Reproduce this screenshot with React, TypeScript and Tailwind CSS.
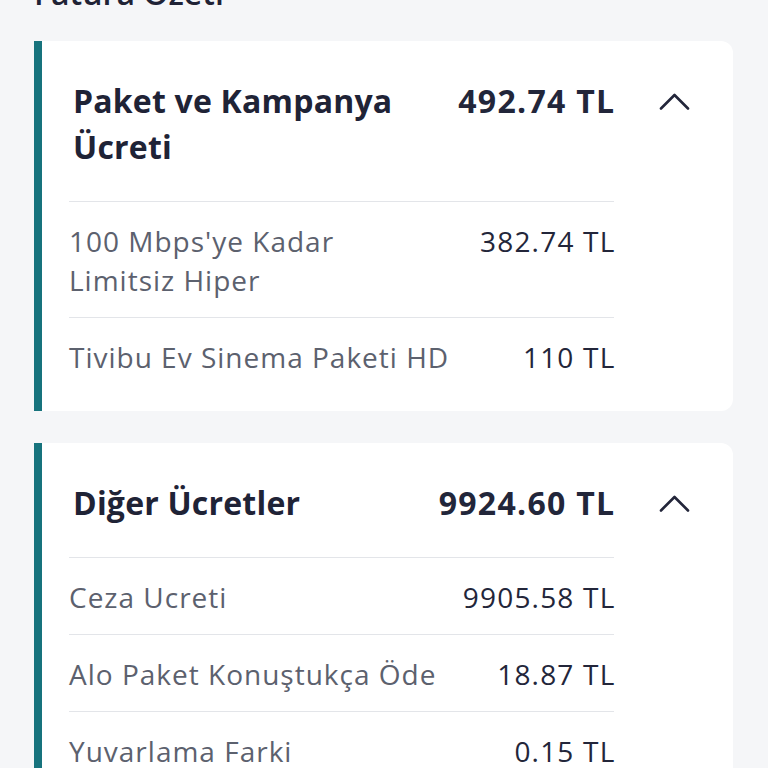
import React from "react";

type Item = { label: React.ReactNode; amount: string };

function Chevron() {
  return (
    <svg width="31" height="18" viewBox="0 0 31 18" fill="none">
      <path d="M2 16.5 L15.5 3 L29 16.5" stroke="#23263a" strokeWidth="2.6" strokeLinecap="round" strokeLinejoin="round" />
    </svg>
  );
}

function Card({ title, total, items }: { title: React.ReactNode; total: string; items: Item[] }) {
  return (
    <div className="flex bg-white rounded-r-[12px] overflow-hidden">
      <div className="w-[8px] shrink-0 bg-[#17737d]" />
      <div className="flex-1 pl-[27px] pr-[43px] pt-[37px] pb-[17px]">
        <div className="flex items-start pb-[31px]">
          <div className="flex-1 pl-[4px] text-[32px] leading-[46px] font-bold tracking-[0.2px] text-[#1f2336]">{title}</div>
          <div className="text-[32px] leading-[46px] font-bold tracking-[1.3px] -mr-[1.5px] text-[#22263a] whitespace-nowrap">{total}</div>
          <div className="w-[76px] h-[46px] flex items-center justify-end">
            <Chevron />
          </div>
        </div>
        <div className="mr-[76px]">
          {items.map((it, i) => (
            <div key={i} className="flex items-start justify-between border-t border-[#e3e5e9] pt-[20px] pb-[17px]">
              <div className="text-[28px] leading-[39px] tracking-[1px] text-[#5c616e] whitespace-nowrap">{it.label}</div>
              <div className="text-[28px] leading-[39px] tracking-[1.2px] -mr-[1.5px] font-medium text-[#23263a] whitespace-nowrap">{it.amount}</div>
            </div>
          ))}
        </div>
      </div>
    </div>
  );
}

export default function App() {
  return (
    <div className="min-h-screen bg-[#f5f6f8] pl-[34px] pr-[35px] font-['Open_Sans',sans-serif] overflow-hidden">
      <h2 className="-mt-[27px] text-[32px] leading-[40px] font-semibold text-[#1f2336]">Fatura Özeti</h2>
      <div className="mt-[28px] flex flex-col gap-[32px]">
        <Card
          title={<>Paket ve Kampanya<br />Ücreti</>}
          total="492.74 TL"
          items={[
            { label: <>100 Mbps'ye Kadar<br />Limitsiz Hiper</>, amount: "382.74 TL" },
            { label: "Tivibu Ev Sinema Paketi HD", amount: "110 TL" },
          ]}
        />
        <Card
          title="Diğer Ücretler"
          total="9924.60 TL"
          items={[
            { label: "Ceza Ucreti", amount: "9905.58 TL" },
            { label: "Alo Paket Konuştukça Öde", amount: "18.87 TL" },
            { label: "Yuvarlama Farki", amount: "0.15 TL" },
          ]}
        />
      </div>
    </div>
  );
}
